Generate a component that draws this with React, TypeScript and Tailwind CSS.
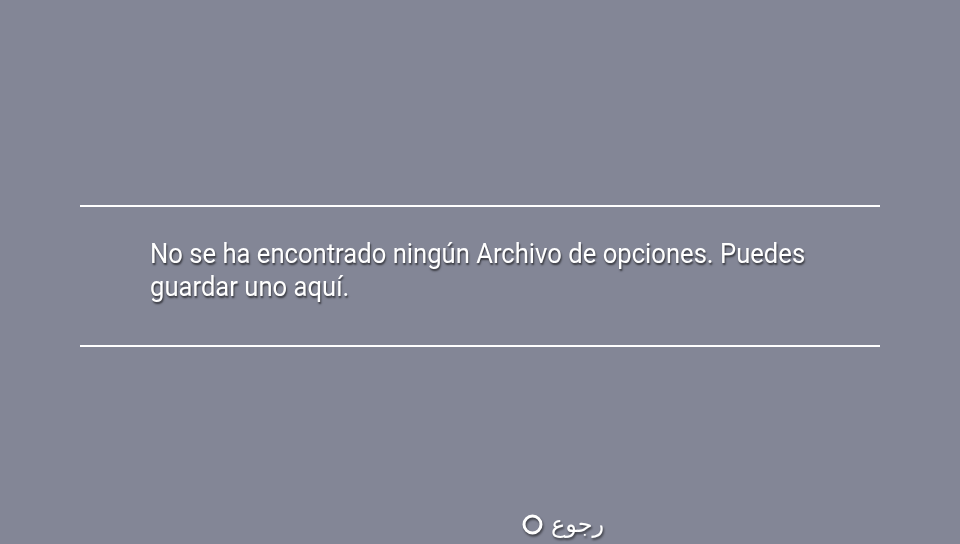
import React from 'react';

const App: React.FC = () => {
  return (
    <div className="w-[960px] h-[544px] bg-[#838696] flex flex-col overflow-hidden font-['Roboto',sans-serif] text-white">
      <div className="h-[205px]" />
      <div className="mx-[80px] h-[2px] bg-white" />
      <div className="h-[138px] px-[150px] pt-[30px]">
        <p className="w-[720px] origin-left scale-x-[0.915] text-[28px] leading-[33px] [text-shadow:1px_2px_2px_rgba(0,0,0,0.6)]">
          No se ha encontrado ningún Archivo de opciones. Puedes guardar uno aquí.
        </p>
      </div>
      <div className="mx-[80px] h-[2px] bg-white" />
      <div className="flex-1" />
      <div className="h-[33px] flex items-start justify-center pl-[166px]">
        <div className="flex items-center gap-[8px] [filter:drop-shadow(1px_2px_1px_rgba(0,0,0,0.55))]">
          <svg width="21" height="21" viewBox="0 0 21 21">
            <circle cx="10.5" cy="10.5" r="8.5" fill="none" stroke="white" strokeWidth="3" />
          </svg>
          <span dir="rtl" className="font-['DejaVu_Sans',sans-serif] text-[24px] leading-[26px]">رجوع</span>
        </div>
      </div>
    </div>
  );
};

export default App;
